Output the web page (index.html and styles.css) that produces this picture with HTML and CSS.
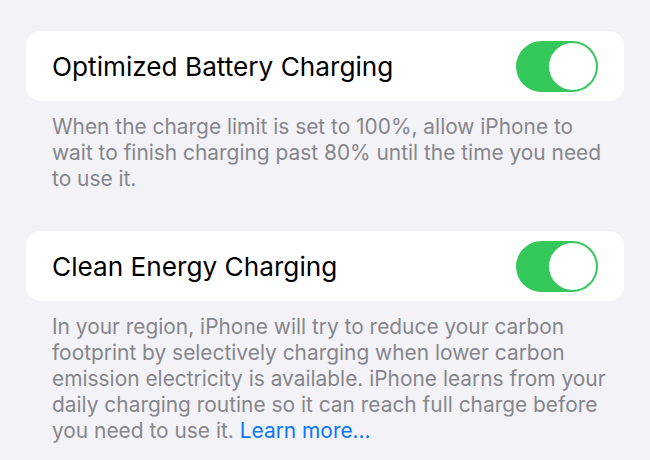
FILE: index.html
```html
<!DOCTYPE html>
<html>
<head>
<meta charset="utf-8">
<link rel="stylesheet" href="styles.css">
</head>
<body>
<div class="page">
  <div class="card">
    <span class="title">Optimized Battery Charging</span>
    <div class="toggle"><div class="knob"></div></div>
  </div>
  <p class="desc">When the charge limit is set to 100%, allow iPhone to wait to finish charging past 80% until the time you need to use it.</p>
  <div class="card card2">
    <span class="title">Clean Energy Charging</span>
    <div class="toggle"><div class="knob"></div></div>
  </div>
  <p class="desc">In your region, iPhone will try to reduce your carbon footprint by selectively charging when lower carbon emission electricity is available. iPhone learns from your daily charging routine so it can reach full charge before you need to use it. <a class="link" href="#">Learn more...</a></p>
</div>
</body>
</html>
```

FILE: styles.css
```css
html, body {
  margin: 0;
  padding: 0;
  background: #f2f2f7;
}
body {
  font-family: Inter, "Liberation Sans", sans-serif;
  width: 650px;
  height: 460px;
  overflow: hidden;
}
.page {
  padding: 31px 26px 0 26px;
}
.card {
  background: #ffffff;
  border-radius: 15px;
  height: 70px;
  display: flex;
  align-items: center;
  justify-content: space-between;
  padding: 0 26px 0 26px;
}
.card2 {
  margin-top: 39px;
}
.title {
  font-size: 26.2px;
  color: #000000;
  letter-spacing: 0;
}
.toggle {
  width: 82px;
  height: 51px;
  border-radius: 26px;
  background: #34c759;
  display: flex;
  align-items: center;
  justify-content: flex-end;
  padding: 0 2px;
  box-sizing: border-box;
}
.knob {
  width: 47px;
  height: 47px;
  border-radius: 50%;
  background: #ffffff;
}
.desc {
  margin: 13px 0 0 0;
  padding: 0 14px 0 26px;
  font-size: 20.9px;
  line-height: 26px;
  color: #86868b;
}
.link {
  color: #0a78f5;
  text-decoration: none;
}
```
